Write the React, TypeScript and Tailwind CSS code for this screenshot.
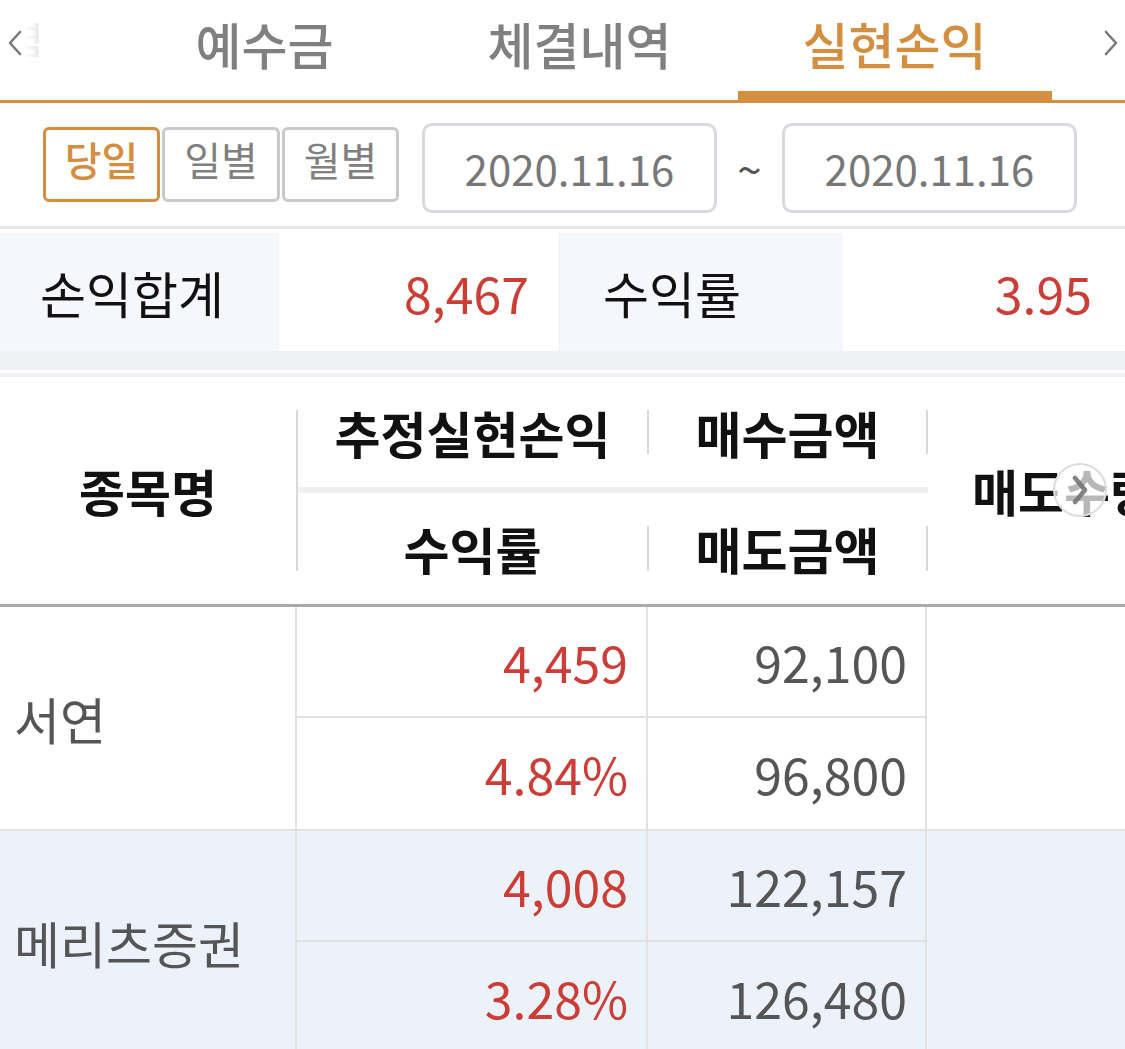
const tabs = ["예수금", "체결내역", "실현손익"];

const rows = [
  { name: "서연", profit: "4,459", rate: "4.84%", buy: "92,100", sell: "96,800", bg: "bg-white" },
  { name: "메리츠증권", profit: "4,008", rate: "3.28%", buy: "122,157", sell: "126,480", bg: "bg-[#ebf2f9]" },
];

function Chevron({ dir }: { dir: "left" | "right" }) {
  return (
    <svg width="16" height="28" viewBox="0 0 16 28" fill="none">
      <path
        d={dir === "left" ? "M13 3 L3 14 L13 25" : "M3 3 L13 14 L3 25"}
        stroke="#7a7a7a"
        strokeWidth="2.6"
        strokeLinecap="round"
        strokeLinejoin="round"
      />
    </svg>
  );
}

export default function App() {
  return (
    <div className="w-[1125px] h-[1049px] overflow-hidden bg-white font-['Noto_Sans_CJK_KR','Noto_Sans',sans-serif]">
      {/* tab bar */}
      <div className="flex h-[103px] border-b-[3px] border-[#d48e40]">
        <div className="w-[107px] flex items-center pb-[14px] pl-[7px]">
          <Chevron dir="left" />
          <div className="relative w-[22px] h-[40px] overflow-hidden">
            <span className="absolute right-[0px] top-[-8px] text-[50px] leading-none text-[#e2e2e2]">결</span>
            <div className="absolute inset-0 bg-gradient-to-r from-white to-white/0" />
          </div>
        </div>
        {tabs.map((t, i) => (
          <div key={t} className="relative w-[315px] flex items-center justify-center pb-[14px]">
            <span className={`text-[50px] leading-none font-medium ${i === 2 ? "text-[#d48e40]" : "text-[#808080]"}`}>{t}</span>
            {i === 2 && <div className="absolute left-[1px] right-0 bottom-0 h-[9px] bg-[#d48e40]" />}
          </div>
        ))}
        <div className="flex-1 flex items-center justify-end pb-[14px] pr-[6px]">
          <Chevron dir="right" />
        </div>
      </div>

      {/* period row */}
      <div className="h-[123px] flex items-center pl-[43px]">
        <div className="flex gap-[2px]">
          <button className="w-[117px] h-[75px] rounded-[6px] border-[3px] border-[#d48e40] text-[40px] font-medium text-[#d48e40] leading-none pb-[12px]">당일</button>
          <button className="w-[118px] h-[75px] rounded-[6px] border-[3px] border-[#cacaca] text-[40px] text-[#808080] leading-none pb-[12px]">일별</button>
          <button className="w-[117px] h-[75px] rounded-[6px] border-[3px] border-[#cacaca] text-[40px] text-[#808080] leading-none pb-[12px]">월별</button>
        </div>
        <div className="flex items-center ml-[23px] mt-[6px]">
          <div className="w-[295px] h-[90px] rounded-[10px] border-[3px] border-[#d9d9df] flex items-center justify-center text-[42px] text-[#777]">2020.11.16</div>
          <span className="w-[65px] text-center text-[44px] leading-none text-[#555]">~</span>
          <div className="w-[295px] h-[90px] rounded-[10px] border-[3px] border-[#d9d9df] flex items-center justify-center text-[42px] text-[#777]">2020.11.16</div>
        </div>
      </div>

      {/* summary */}
      <div className="h-[3px] bg-[#e6e7eb]" />
      <div className="h-[4px]" />
      <div className="flex h-[118px] text-[50px]">
        <div className="w-[279px] bg-[#f5f7fc] flex items-center pl-[40px] text-[#111]">손익합계</div>
        <div className="w-[280px] flex items-center justify-end pr-[30px] text-[#cc3d36]">8,467</div>
        <div className="w-[1px] bg-[#eceef2]" />
        <div className="w-[283px] bg-[#f5f7fc] flex items-center pl-[43px] text-[#111]">수익률</div>
        <div className="flex-1 flex items-center justify-end pr-[33px] text-[#cc3d36]">3.95</div>
      </div>
      <div className="h-[19px] bg-[#f0f1f4]" />
      <div className="h-[3px]" />
      <div className="h-[4px] bg-[#f0f1f3]" />

      {/* table header */}
      <div className="relative flex h-[230px] border-b-[3px] border-[#aaaaaa] text-[50px] font-bold text-[#111]">
        <div className="w-[296px] flex items-center justify-center">종목명</div>
        <div className="w-[2px] bg-[#d9d9d9] my-[33px]" />
        <div className="flex flex-col w-[630px]">
          <div className="flex h-[110px] items-center">
            <div className="w-[349px] text-center">추정실현손익</div>
            <div className="w-[2px] h-[44px] bg-[#d9d9d9]" />
            <div className="w-[277px] text-center">매수금액</div>
            <div className="w-[2px] h-[44px] bg-[#d9d9d9]" />
          </div>
          <div className="h-[6px] bg-[#f0f0f0]" />
          <div className="flex flex-1 items-center">
            <div className="w-[349px] text-center">수익률</div>
            <div className="w-[2px] h-[45px] bg-[#d9d9d9]" />
            <div className="w-[277px] text-center">매도금액</div>
            <div className="w-[2px] h-[45px] bg-[#d9d9d9]" />
          </div>
        </div>
        <div className="flex-1 flex items-center pl-[44px] whitespace-nowrap overflow-hidden">매도수량</div>
        <div className="absolute left-[1053px] top-[86px] w-[54px] h-[54px] rounded-full border-[2px] border-[#dcdcdc] bg-white/70 flex items-center justify-center">
          <svg width="18" height="30" viewBox="0 0 18 30" fill="none">
            <path d="M4 3 L14 15 L4 27" stroke="#6e6e6e" strokeWidth="4.5" strokeLinecap="round" strokeLinejoin="round" opacity="0.85" />
          </svg>
        </div>
      </div>

      {/* rows */}
      {rows.map((r) => (
        <div key={r.name} className={`flex h-[224px] border-b-[2px] border-[#e2e2e2] ${r.bg} text-[50px]`}>
          <div className="w-[297px] border-r-[2px] border-[#e2e2e2] flex items-center pl-[14px] text-[#555]">{r.name}</div>
          <div className="w-[351px] border-r-[2px] border-[#e2e2e2] flex flex-col text-[#cc3d36]">
            <div className="h-[111px] border-b-[2px] border-[#e2e2e2] flex items-center justify-end pr-[18px]">{r.profit}</div>
            <div className="flex-1 flex items-center justify-end pr-[18px]">{r.rate}</div>
          </div>
          <div className="w-[279px] border-r-[2px] border-[#e2e2e2] flex flex-col text-[#555]">
            <div className="h-[111px] border-b-[2px] border-[#e2e2e2] flex items-center justify-end pr-[18px]">{r.buy}</div>
            <div className="flex-1 flex items-center justify-end pr-[18px]">{r.sell}</div>
          </div>
          <div className="flex-1" />
        </div>
      ))}
    </div>
  );
}
